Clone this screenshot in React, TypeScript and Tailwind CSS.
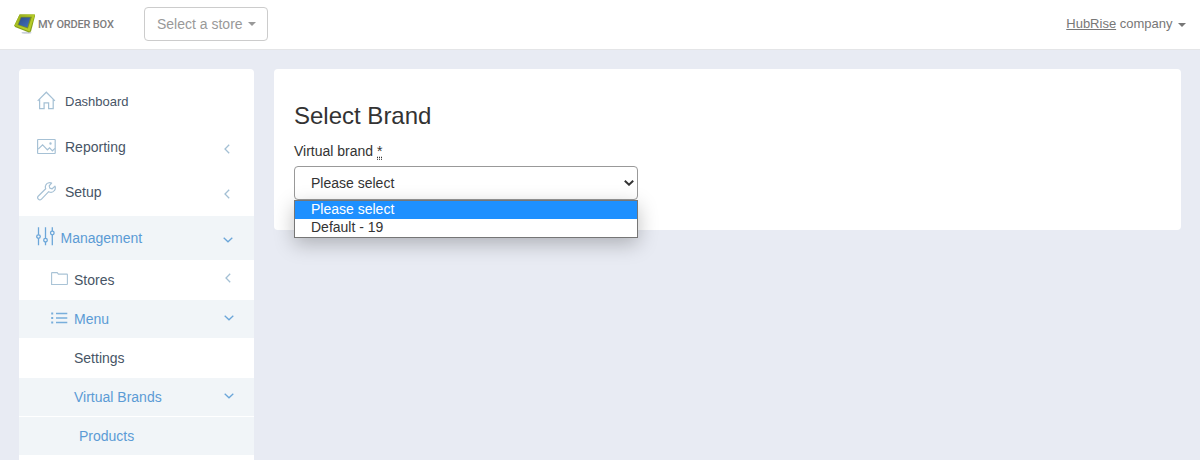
import React from "react";

type ChevronProps = { open?: boolean; className?: string };

function Chevron({ open = false, className = "" }: ChevronProps) {
  return open ? (
    <svg className={`h-[6px] w-[10px] shrink-0 ${className}`} viewBox="0 0 10 6" fill="none" stroke="#6ba6d9" strokeWidth="1.3">
      <path d="M.7.8 5 4.8 9.3.8" />
    </svg>
  ) : (
    <svg className={`h-[10px] w-[6px] shrink-0 ${className}`} viewBox="0 0 6 10" fill="none" stroke="#a3bfd4" strokeWidth="1.3">
      <path d="M5.2.7 1 5l4.2 4.3" />
    </svg>
  );
}

function HomeIcon() {
  return (
    <svg className="h-[19px] w-[19px]" viewBox="0 0 19 19" fill="none" stroke="#a6c1d5" strokeWidth="1.25">
      <path d="M.7 9.9 9.3 1.2l8.6 8.7M2.6 8.6v9h4.5v-5.8h4.5v5.8h4.6v-9" />
    </svg>
  );
}

function ImageIcon() {
  return (
    <svg className="h-[17px] w-[19px]" viewBox="0 0 19 17" fill="none" stroke="#a6c1d5" strokeWidth="1.2">
      <rect x=".6" y="1.5" width="17.6" height="14" rx=".5" />
      <path d="m1.2 11.2 4.4-4.4 4.8 5 2.2-2 2.8 3 2.6-2.4" />
      <circle cx="13.5" cy="5.5" r=".6" />
    </svg>
  );
}

function WrenchIcon() {
  return (
    <svg className="h-[19px] w-[19px]" viewBox="0 0 19 19" fill="none" stroke="#a6c1d5" strokeWidth="1.2" strokeLinejoin="round">
      <path d="M14.6 1c-2.4-.8-5 .1-5.9 2.3-.5 1.1-.4 2.4 0 3.5L1.4 14c-1 1-.9 2.3-.1 3.1.9.9 2.3.9 3.2 0l7.2-7.4c2.2 1.1 4.5.4 5.7-1.2 1-1.2 1.1-3 .6-4.4l-2.8 2.7-2.4-.7-.6-2.2z" />
    </svg>
  );
}

function SlidersIcon() {
  return (
    <svg className="h-[19px] w-[19px]" viewBox="0 0 19 19" fill="none" stroke="#6ba6d9" strokeWidth="1.3">
      <path d="M2.5.3v7.5M2.5 11.4v6.9M9.5.3v10.8M9.5 15v3.3M16.3.3v3.8M16.3 8v10.3" />
      <circle cx="2.5" cy="9.6" r="1.8" />
      <circle cx="9.5" cy="13.2" r="1.8" />
      <circle cx="16.3" cy="6" r="1.8" />
    </svg>
  );
}

function FolderIcon() {
  return (
    <svg className="h-[14px] w-[17px]" viewBox="0 0 17 14" fill="none" stroke="#a9c3d6" strokeWidth="1.1">
      <path d="M.6 12.5V1.2q0-.6.6-.6h5l1.2 1.5h8.5q.5 0 .5.5v9.4q0 .5-.5.5z" />
    </svg>
  );
}

function ListIcon() {
  return (
    <svg className="h-[12px] w-[17px]" viewBox="0 0 17 12" fill="none" stroke="#78aedb" strokeWidth="1.3">
      <path d="M5 1.5h11.3M5 6h11.3M5 10.5h11.3" />
      <path strokeWidth="2" d="M.2 1.5h2M.2 6h2M.2 10.5h2" />
    </svg>
  );
}

function Logo() {
  return (
    <svg className="h-[20px] w-[22px]" viewBox="0 0 22 20">
      <defs>
        <linearGradient id="frame" x1="0" y1="0" x2="1" y2="1">
          <stop offset="0" stopColor="#93a91c" />
          <stop offset=".5" stopColor="#b4ca26" />
          <stop offset="1" stopColor="#b9cd2a" />
        </linearGradient>
        <linearGradient id="screen" x1="0" y1="0" x2="1" y2="1">
          <stop offset="0" stopColor="#2f4f8a" />
          <stop offset="1" stopColor="#4170bd" />
        </linearGradient>
      </defs>
      <ellipse cx="12.5" cy="18.7" rx="5" ry="1" fill="#c9cedb" />
      <path d="M5.6.6 20.8.5 21 2 17 17.6 15 18.6 1 13 .3 11.6z" fill="#86a01a" />
      <path d="M5.6.6 20.8.5 15.6 17.6.4 11.5z" fill="url(#frame)" />
      <path d="M6.7 2.8h11.2l-4 11.6L3.6 10.9z" fill="#7b8f22" />
      <path d="M7.2 3.6h9l-2.9 9.8-8.8-3z" fill="url(#screen)" />
    </svg>
  );
}

type RowProps = {
  label: string;
  row: string;
  text?: string;
  icon?: React.ReactNode;
  iconBox?: string;
  chevron?: React.ReactNode;
};

function NavRow({ label, row, text = "", icon, iconBox = "", chevron }: RowProps) {
  return (
    <a className={`flex shrink-0 items-center ${row}`}>
      {icon && <span className={`flex shrink-0 items-center ${iconBox}`}>{icon}</span>}
      <span className={`flex-1 ${text}`}>{label}</span>
      {chevron}
    </a>
  );
}

export default function App() {
  return (
    <div className="flex h-[460px] w-[1200px] flex-col overflow-hidden bg-[#e8ebf3] font-['Liberation_Sans',Arial,sans-serif] text-[14px] leading-5 text-[#333]">
      <header className="flex h-[50px] shrink-0 items-center border-b border-[#e4e5e7] bg-white px-[14px]">
        <div className="flex w-[130px] items-center gap-[2px] pb-[2px]">
          <Logo />
          <span className="pt-[2px] font-[Roboto,sans-serif] text-[11px] leading-4 font-medium tracking-[-0.18px] whitespace-nowrap text-[#7d7d7d]">MY ORDER BOX</span>
        </div>
        <button className="mb-[1px] flex h-[34px] w-[124px] items-center rounded-[4px] border border-[#ccc] pl-[12px] text-[14px] text-[#999]">
          Select a store
          <span className="ml-[5px] border-x-4 border-t-4 border-x-transparent border-t-[#999]" />
        </button>
        <div className="ml-auto flex items-center pb-[2px] text-[13px] text-[#777]">
          <span><u>HubRise</u> company</span>
          <span className="mt-[2px] ml-[5.5px] border-x-4 border-t-4 border-x-transparent border-t-[#777]" />
        </div>
      </header>

      <div className="flex min-h-0 flex-1 items-start gap-5 pt-[19px] pl-[19px]">
        <nav className="flex h-[391px] w-[235px] shrink-0 flex-col overflow-hidden rounded-t-[4px] bg-white pt-[10px] text-[#475566]">
          <NavRow label="Dashboard" row="h-[45px] pl-[18px] pr-[24px]" text="text-[13px]" iconBox="w-[28px] pb-[2px]" icon={<HomeIcon />} />
          <NavRow label="Reporting" row="h-[46px] pl-[18px] pr-[24px]" iconBox="w-[28px] pb-[1px]" icon={<ImageIcon />} chevron={<Chevron className="mt-[3px]" />} />
          <NavRow label="Setup" row="h-[46px] pl-[18px] pr-[24px] pb-[2px]" iconBox="w-[28px] pb-[2px]" icon={<WrenchIcon />} chevron={<Chevron className="mt-[3px]" />} />
          <NavRow label="Management" row="h-[44px] bg-[#f1f5f8] pl-[17px] pr-[21px] text-[#5b9bd5]" iconBox="w-[24.5px] pb-[3px]" icon={<SlidersIcon />} chevron={<Chevron open className="mt-[3px]" />} />
          <NavRow label="Stores" row="h-[40px] pl-[32px] pr-[23px]" iconBox="w-[23px] pb-[2px]" icon={<FolderIcon />} chevron={<Chevron className="mb-[4px]" />} />
          <NavRow label="Menu" row="h-[38px] bg-[#f1f5f8] pl-[32px] pr-[20px] text-[#5b9bd5]" iconBox="w-[23px] pb-[2px]" icon={<ListIcon />} chevron={<Chevron open className="mb-[2px]" />} />
          <NavRow label="Settings" row="h-[40px] pl-[55px]" />
          <NavRow label="Virtual Brands" row="h-[38px] bg-[#f1f5f8] pl-[55px] pr-[20px] text-[#5b9bd5]" chevron={<Chevron open className="mb-[2px]" />} />
          <NavRow label="Products" row="mt-px h-[38px] bg-[#f1f5f8] pl-[60px] text-[#5b9bd5]" />
        </nav>

        <main className="flex h-[161px] w-[907px] flex-col rounded-[4px] bg-white px-5 pt-[33px]">
          <h1 className="text-[24px] leading-[28px]">Select Brand</h1>
          <label className="mt-[11px] leading-5">
            Virtual brand <abbr title="required" className="border-b border-dotted border-[#555] underline decoration-dotted">*</abbr>
          </label>
          <div className="relative mt-[5px] flex h-[34px] w-[344px] shrink-0 items-center justify-between rounded-[4px] border border-[#999] bg-white pr-[3px] pl-4">
            <span>Please select</span>
            <svg className="h-[6px] w-[10px]" viewBox="0 0 10 6" fill="none" stroke="#333" strokeWidth="2">
              <path d="M.8.8 5 4.7 9.2.8" />
            </svg>
            <ul className="absolute top-[33px] -left-px w-[344px] border border-[#767676] bg-white shadow-[0_6px_20px_rgba(0,0,0,0.25)]">
              <li className="h-[18px] bg-[#1e90ff] pl-4 leading-[17px] text-white">Please select</li>
              <li className="h-[18px] pl-4 leading-[17px]">Default - 19</li>
            </ul>
          </div>
        </main>
      </div>
    </div>
  );
}
